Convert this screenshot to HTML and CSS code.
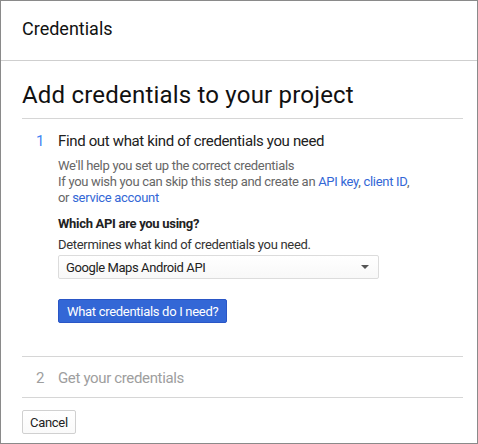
FILE: index.html
```html
<!DOCTYPE html>
<html>
<head>
<meta charset="utf-8">
<link rel="stylesheet" href="styles.css">
</head>
<body>
<div class="frame">
  <header class="topbar">Credentials</header>
  <main class="content">
    <h1 class="title">Add credentials to your project</h1>
    <section class="step step-active">
      <div class="step-head">
        <span class="step-num">1</span>
        <span class="step-title">Find out what kind of credentials you need</span>
      </div>
      <div class="step-body">
        <p class="desc">We'll help you set up the correct credentials<br>If you wish you can skip this step and create an <a class="link">API key</a>, <a class="link">client ID</a>,<br>or <a class="link">service account</a></p>
        <div class="label">Which API are you using?</div>
        <div class="hint">Determines what kind of credentials you need.</div>
        <div class="select">
          <span>Google Maps Android API</span>
          <span class="caret"></span>
        </div>
        <button class="btn-primary">What credentials do I need?</button>
      </div>
    </section>
    <section class="step step-disabled">
      <div class="step-head">
        <span class="step-num">2</span>
        <span class="step-title">Get your credentials</span>
      </div>
    </section>
    <div class="actions">
      <button class="btn">Cancel</button>
    </div>
  </main>
</div>
</body>
</html>
```

FILE: styles.css
```css
* { box-sizing: border-box; }
html, body { margin: 0; padding: 0; }
body {
  font-family: Roboto, "Noto Sans", Arial, sans-serif;
  color: #212121;
  background: #fff;
}
.frame {
  width: 478px;
  height: 444px;
  border: 1px solid #8a8a8a;
  display: flex;
  flex-direction: column;
  overflow: hidden;
}
.topbar {
  height: 60px;
  border-bottom: 1px solid #cfcfcf;
  padding: 0 0 0 21px;
  font-size: 18px;
  line-height: 56px;
  color: #111;
}
.content {
  padding: 0 14px 0 21px;
}
.title {
  margin: 0;
  padding: 18px 0 7px;
  font-size: 24px;
  letter-spacing: 0.2px;
  line-height: 32px;
  font-weight: 400;
  color: #111;
  border-bottom: 1px solid #d6d6d6;
}
.step {
  border-bottom: 1px solid #d6d6d6;
}
.step-active {
  padding: 12px 0 33px;
}
.step-disabled {
  padding: 11px 0 9px;
}
.step-head {
  display: flex;
  font-size: 15px;
  line-height: 20px;
  letter-spacing: -0.35px;
}
.step-num {
  width: 36px;
  padding-left: 14px;
  color: #4285f4;
}
.step-title { color: #212121; }
.step-disabled .step-num,
.step-disabled .step-title { color: #9e9e9e; }
.step-body {
  padding-left: 36px;
  letter-spacing: -0.3px;
}
.desc {
  margin: 7px 0 0;
  font-size: 13px;
  line-height: 16px;
  color: #666;
}
.link { color: #3367d6; text-decoration: none; }
.label {
  margin-top: 10px;
  font-size: 13px;
  line-height: 16px;
  font-weight: 700;
  color: #222;
}
.hint {
  margin-top: 5px;
  font-size: 13px;
  line-height: 16px;
  color: #333;
}
.select {
  margin-top: 2px;
  width: 321px;
  height: 24px;
  border: 1px solid #dcdcdc;
  border-radius: 2px;
  background: linear-gradient(#fff, #f8f8f8);
  display: flex;
  align-items: center;
  justify-content: space-between;
  padding: 0 9px 0 7px;
  font-size: 13px;
  letter-spacing: -0.4px;
  color: #222;
}
.caret {
  width: 0;
  height: 0;
  border-left: 4px solid transparent;
  border-right: 4px solid transparent;
  border-top: 4px solid #555;
}
.btn-primary {
  display: block;
  margin-top: 20px;
  height: 24px;
  padding: 0 8px;
  border: 1px solid #2a56c6;
  border-radius: 2px;
  background: #3367d6;
  color: #fff;
  font-family: inherit;
  font-size: 13px;
  letter-spacing: -0.3px;
}
.actions {
  padding-top: 12px;
}
.btn {
  height: 24px;
  padding: 0 7px;
  border: 1px solid #d0d0d0;
  border-radius: 2px;
  background: linear-gradient(#fff, #fafafa);
  color: #222;
  font-family: inherit;
  font-size: 13px;
  letter-spacing: -0.3px;
}
```
